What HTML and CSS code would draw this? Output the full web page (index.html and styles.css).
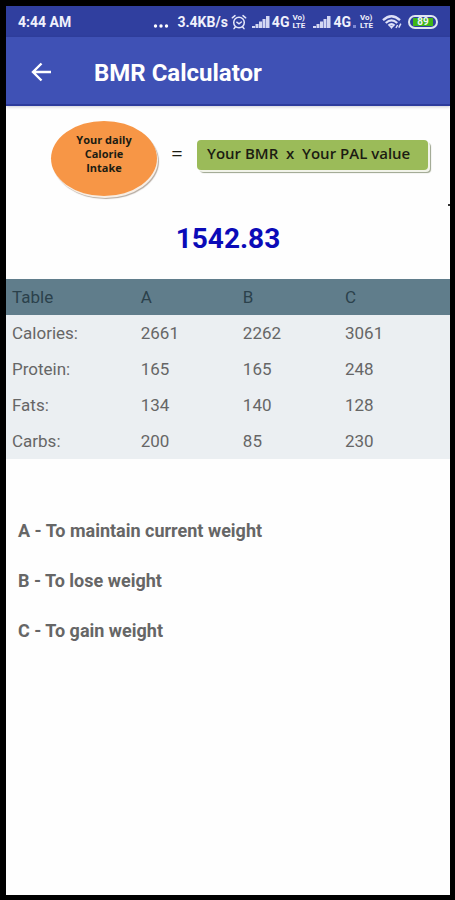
FILE: index.html
```html
<!DOCTYPE html>
<html lang="en">
<head>
    <meta charset="UTF-8">
    <meta name="viewport" content="width=device-width, initial-scale=1.0">
    <title>BMR Calculator</title>
    <link rel="stylesheet" href="styles.css">
</head>
<body>
    <div class="screen">
        <div class="status-bar">
            <span class="clock">4:44 AM</span>
            <div class="status-icons">
                <svg class="dots" width="16" height="16" viewBox="0 0 16 16" fill="#fff">
                    <circle cx="2.5" cy="12" r="1.7"/><circle cx="8" cy="12" r="1.7"/><circle cx="13.5" cy="12" r="1.7"/>
                </svg>
                <span class="speed">3.4KB/s</span>
                <svg class="alarm" width="16" height="16" viewBox="0 0 16 16" fill="none" stroke="#e4e7fa" stroke-width="1.5" stroke-linecap="round">
                    <circle cx="8" cy="8.5" r="5.3"/>
                    <path d="M1.3 3.8L4 1.6M14.7 3.8L12 1.6M5.8 8.2L8 9.8l2.4-1.8M4.3 13l-1.3 1.6M11.7 13l1.3 1.6"/>
                </svg>
                <svg class="signal" width="18" height="14" viewBox="0 0 18 14" fill="#d3d7f3">
                    <path d="M0 13v-2h3v2zM3.5 13V9h3v4zM7 13V6.5h3V13zM10.5 13V4h3v9zM14 13V1h3.5v12z"/>
                </svg>
                <span class="network">4G</span>
                <span class="volte"><span>Vo)</span><span>LTE</span></span>
                <svg class="signal" width="18" height="14" viewBox="0 0 18 14" fill="#d3d7f3">
                    <path d="M0 13v-2h3v2zM3.5 13V9h3v4zM7 13V6.5h3V13zM10.5 13V4h3v9zM14 13V1h3.5v12z"/>
                </svg>
                <span class="network">4G</span>
                <svg class="activity" width="4" height="14" viewBox="0 0 4 14" fill="#7f89d3">
                    <path d="M0 10h3v3H0z"/>
                </svg>
                <span class="volte"><span>Vo)</span><span>LTE</span></span>
                <svg class="wifi" width="20" height="16" viewBox="0 0 20 16" fill="none" stroke="#dde0f7" stroke-width="2.3">
                    <path d="M1 6.2Q9.5-1.8 18 6.2M3.8 9Q9.5 3.8 15.2 9M6.5 11.6Q9.5 9 12.5 11.6"/>
                    <path d="M7.2 12h4.6L9.5 15z" fill="#dde0f7" stroke="none"/>
                    <path d="M14 14l1.6-3M16.8 13.6l2-4" stroke-width="1.5"/>
                </svg>
                <span class="battery"><span class="battery-level">89</span></span>
            </div>
        </div>

        <header class="app-bar">
            <button class="back" type="button" aria-label="Back">
                <svg width="22" height="22" viewBox="0 0 22 22" fill="none" stroke="#fff" stroke-width="2.4">
                    <path d="M21 11H3M11.5 2.5L3 11l8.5 8.5"/>
                </svg>
            </button>
            <h1>BMR Calculator</h1>
        </header>

        <main>
            <div class="formula">
                <div class="intake">Your daily<br>Calorie<br>Intake</div>
                <span class="equals">=</span>
                <div class="product">Your BMR&nbsp; x&nbsp; Your PAL value</div>
            </div>
            <p class="result">1542.83</p>

            <table class="macros">
                <thead>
                    <tr><th>Table</th><th>A</th><th>B</th><th>C</th></tr>
                </thead>
                <tbody>
                    <tr><th>Calories:</th><td>2661</td><td>2262</td><td>3061</td></tr>
                    <tr><th>Protein:</th><td>165</td><td>165</td><td>248</td></tr>
                    <tr><th>Fats:</th><td>134</td><td>140</td><td>128</td></tr>
                    <tr><th>Carbs:</th><td>200</td><td>85</td><td>230</td></tr>
                </tbody>
            </table>

            <div class="legend">
                <p>A - To maintain current weight</p>
                <p>B - To lose weight</p>
                <p>C - To gain weight</p>
            </div>
        </main>
        <span class="edge-mark"></span>
    </div>
</body>
</html>
```

FILE: styles.css
```css
* {
    box-sizing: border-box;
}
body {
    margin: 0;
    padding: 6px 5px 5px 6px;
    min-height: 100vh;
    display: flex;
    background: #000;
    color: #666;
    font-family: Roboto, sans-serif;
}
.screen {
    position: relative;
    flex: 1;
    background: #fefefe;
}
.status-bar {
    display: flex;
    align-items: center;
    justify-content: space-between;
    height: 31px;
    padding: 0 12px;
    background: #303f9f;
    color: #f0f1fc;
    font-size: 14px;
    font-weight: 700;
}
.status-icons {
    display: flex;
    align-items: center;
}
.speed {
    margin: 0 3px 0 8px;
}
.signal {
    margin: 0 2px 0 5px;
}
.volte {
    display: flex;
    flex-direction: column;
    width: 16px;
    margin-left: 3px;
    font-size: 8px;
    line-height: 8px;
}
.activity {
    margin-left: 2px;
}
.wifi {
    margin: 0 6px;
}
.battery {
    width: 30px;
    height: 14px;
    padding: 1px 3px;
    border: 2px solid #dfe6f2;
    border-radius: 7px;
    background: #303f9f;
}
.battery-level {
    display: block;
    background: #3fb618;
    font-size: 10px;
    line-height: 8px;
    text-align: center;
}
.app-bar {
    display: flex;
    align-items: center;
    gap: 42px;
    height: 69px;
    padding: 2px 0 0 24px;
    background: #3f51b5;
    border-bottom: 2px solid #2d3b9c;
    box-shadow: 0 1px 3px rgba(0, 0, 50, 0.2);
    color: #fff;
}
.back {
    display: flex;
    padding: 0;
    border: 0;
    background: none;
}
h1 {
    margin: 0;
    padding-top: 2px;
    font-size: 24px;
    font-weight: 700;
}
.formula {
    display: flex;
    align-items: flex-start;
    margin: 15px 22px 0 45px;
    color: #1c1c12;
    font-family: "Open Sans", sans-serif;
}
.intake {
    width: 106px;
    height: 75px;
    padding-top: 12px;
    border-radius: 50%;
    background: #f79646;
    box-shadow: 1px 2px 0 #f7eee5, 2px 3px 1px #b5aaa0;
    font-size: 11px;
    font-weight: 700;
    line-height: 14px;
    text-align: center;
}
.equals {
    flex: 1;
    padding-top: 21px;
    font-size: 20px;
    line-height: 24px;
    text-align: center;
}
.product {
    width: 231px;
    height: 30px;
    margin-top: 19px;
    padding-left: 10px;
    border-radius: 4px;
    background: #9bbb59;
    box-shadow: 2px 2px 0 #f2f4ea, 3px 3px 1px #9ba38c;
    font-size: 15px;
    font-weight: 600;
    line-height: 26px;
    white-space: nowrap;
}
.result {
    margin: 23px 0 20px;
    color: #0b0bb8;
    font-size: 28px;
    font-weight: 700;
    line-height: 40px;
    text-align: center;
}
.macros {
    width: 100%;
    border-collapse: collapse;
    table-layout: fixed;
    background: #ebeff2;
    font-size: 17px;
}
.macros th,
.macros td {
    height: 36px;
    padding: 0 0 0 6px;
    font-weight: 400;
    text-align: left;
}
.macros th:first-child {
    width: 29%;
}
.macros th:nth-child(2),
.macros th:nth-child(3) {
    width: 23%;
}
.macros thead {
    background: #607d8b;
    color: #2b414b;
}
.legend {
    padding: 57px 12px 0;
    font-size: 18px;
    font-weight: 700;
    line-height: 30px;
}
.legend p {
    margin: 0 0 20px;
}
/* small handle on the right edge of the screen */
.edge-mark {
    position: absolute;
    top: 198px;
    right: 0;
    width: 2px;
    height: 2px;
    background: #333;
}
```
